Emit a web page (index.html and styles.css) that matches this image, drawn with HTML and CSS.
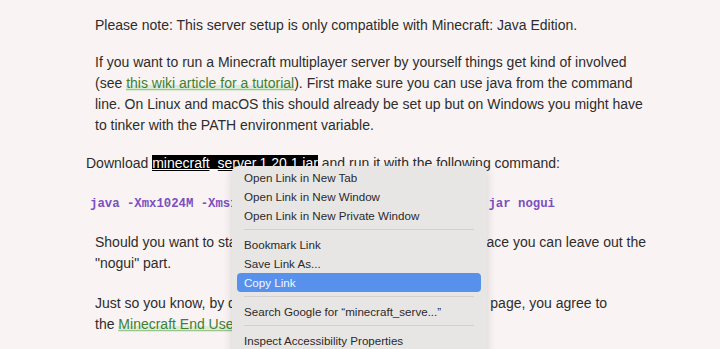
FILE: index.html
```html
<!DOCTYPE html>
<html lang="en">
<head>
    <meta charset="UTF-8">
    <meta name="viewport" content="width=device-width, initial-scale=1.0">
    <title>Minecraft Server Setup</title>
    <link rel="stylesheet" href="styles.css">
</head>
<body>
    <div class="page">
        <p class="note">Please note: This server setup is only compatible with Minecraft: Java Edition.</p>

        <p>If you want to run a Minecraft multiplayer server by yourself things get kind of involved
        (see <a href="#">this wiki article for a tutorial</a>). First make sure you can use java from the command
        line. On Linux and macOS this should already be set up but on Windows you might have
        to tinker with the PATH environment variable.</p>

        <p class="download">Download <a href="#" class="selected">minecraft_server.1.20.1.jar</a> and run it with the following command:</p>

        <pre class="command">java -Xmx1024M -Xms1024M -jar minecraft_server.1.20.1.jar nogui</pre>

        <p class="gui">Should you want to start your server without the graphical interface you can leave out the
        "nogui" part.</p>

        <p>Just so you know, by downloading any of the software from this page, you agree to<br>
        the <a href="#">Minecraft End User License Agreement</a> and <a href="#">Privacy Policy</a>.</p>

        <ul class="context-menu">
            <li>Open Link in New Tab</li>
            <li>Open Link in New Window</li>
            <li>Open Link in New Private Window</li>
            <li class="separator"></li>
            <li>Bookmark Link</li>
            <li>Save Link As...</li>
            <li class="active">Copy Link</li>
            <li class="separator"></li>
            <li>Search Google for “minecraft_serve...”</li>
            <li class="separator"></li>
            <li>Inspect Accessibility Properties</li>
        </ul>
    </div>
</body>
</html>
```

FILE: styles.css
```css
body {
    font-family: "Liberation Sans", Arial, sans-serif;
    background-color: #f9f4f3;
    color: #2e2c2c;
    margin: 0;
    overflow: hidden;
}
.page {
    position: relative;
    height: 349px;
    padding: 15px 0 0 95px;
    box-sizing: border-box;
    font-size: 14px;
    line-height: 21px;
}
p {
    margin: 0 0 17px 0;
    width: 556px;
}
.note {
    margin-bottom: 16px;
}
.gui {
    margin-bottom: 19px;
}
a {
    color: #3f7f35;
    text-decoration: underline;
    text-decoration-color: #9cc48f;
    background: linear-gradient(transparent 60%, #dcebd5 60%);
}
.download {
    margin-left: -9px;
    width: 600px;
}
a.selected {
    background: #000;
    color: #fff;
    text-decoration-color: #fff;
}
.command {
    font-family: "Liberation Mono", "DejaVu Sans Mono", monospace;
    font-size: 12.3px;
    font-weight: bold;
    color: #7b4fbf;
    margin: 20px 0 17px -5px;
    line-height: 21px;
}
.context-menu {
    position: absolute;
    left: 232px;
    top: 166px;
    width: 255px;
    height: 200px;
    margin: 0;
    padding: 2px 6px 0 5px;
    list-style: none;
    background-color: #e8e6e5;
    border-radius: 6px;
    box-shadow: 0 2px 10px rgba(0, 0, 0, 0.15);
    font-size: 11.6px;
    color: #2b2929;
    box-sizing: border-box;
}
.context-menu li {
    padding: 0 7px;
    line-height: 19px;
    border-radius: 4px;
}
.context-menu li.separator {
    height: 1px;
    background-color: #d3d1d0;
    margin: 4px 7px 5px;
    padding: 0;
}
.context-menu li.active {
    background-color: #5791ec;
    color: #f4f7fd;
}
```
